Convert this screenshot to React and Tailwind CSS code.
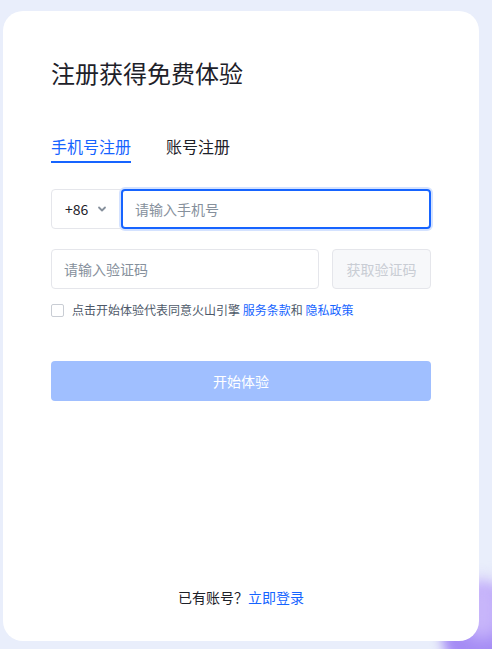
import React from "react";

export default function App() {
  const font = { fontFamily: '"Noto Sans CJK SC", "Noto Sans", sans-serif' };
  return (
    <div className="relative w-[492px] h-[649px] overflow-hidden bg-[#e9eefb]" style={font}>
      <div className="absolute right-[-40px] bottom-[-30px] w-[90px] h-[90px] rounded-full bg-[#a58cf5] blur-[6px]" />
      <div className="absolute right-[-10px] bottom-[10px] w-[40px] h-[60px] rounded-full bg-[#c7b5fa] blur-[8px]" />
      <div className="relative ml-[3px] mt-[11px] w-[476px] h-[630px] rounded-[20px] bg-white px-[48px] pt-[46px] flex flex-col">
        <h1 className="text-[24px] leading-[32px] text-[#1d2129] font-normal">注册获得免费体验</h1>
        <div className="mt-[46px] flex gap-[35px] text-[16px] leading-[22px]">
          <div className="relative text-[#1664ff] pb-[4px]">
            手机号注册
            <div className="absolute left-0 right-0 bottom-[-2px] h-[2px] bg-[#1664ff]" />
          </div>
          <div className="text-[#1d2129]">账号注册</div>
        </div>
        <div className="mt-[28px] flex h-[40px]">
          <div className="w-[71px] flex items-center pl-[13px] gap-[8px] border border-[#e5e6eb] rounded-l-[4px] text-[14px] text-[#1d2129]">
            +86
            <svg width="12" height="12" viewBox="0 0 12 12" fill="none" stroke="#86909c" strokeWidth="1.8" strokeLinecap="round" strokeLinejoin="round"><path d="M3 4.5 6 7.5 9 4.5" /></svg>
          </div>
          <div className="flex-1 flex items-center border-[2px] border-[#1664ff] rounded-[4px] -ml-[1px] pl-[12px] text-[14px] text-[#86909c] shadow-[0_0_0_2px_#d4e2ff]">
            请输入手机号
          </div>
        </div>
        <div className="mt-[20px] flex h-[40px] gap-[13px]">
          <div className="flex-1 flex items-center border border-[#e5e6eb] rounded-[4px] pl-[12px] text-[14px] text-[#86909c]">
            请输入验证码
          </div>
          <div className="w-[99px] flex items-center justify-center border border-[#e5e6eb] bg-[#f7f8fa] rounded-[4px] text-[14px] text-[#c9cdd4]">
            获取验证码
          </div>
        </div>
        <div className="mt-[12px] flex items-center gap-[8px] text-[12px] leading-[18px] text-[#4e5969]">
          <div className="w-[13px] h-[13px] border border-[#c9cdd4] rounded-[2px]" />
          <div>
            点击开始体验代表同意火山引擎 <span className="text-[#1664ff]">服务条款</span>和 <span className="text-[#1664ff]">隐私政策</span>
          </div>
        </div>
        <div className="mt-[42px] h-[40px] rounded-[4px] bg-[#a0bfff] flex items-center justify-center text-[14px] text-white">
          开始体验
        </div>
        <div className="mt-auto mb-[33px] text-center text-[14px] text-[#1d2129]">
          已有账号？<span className="text-[#1664ff]">立即登录</span>
        </div>
      </div>
    </div>
  );
}
